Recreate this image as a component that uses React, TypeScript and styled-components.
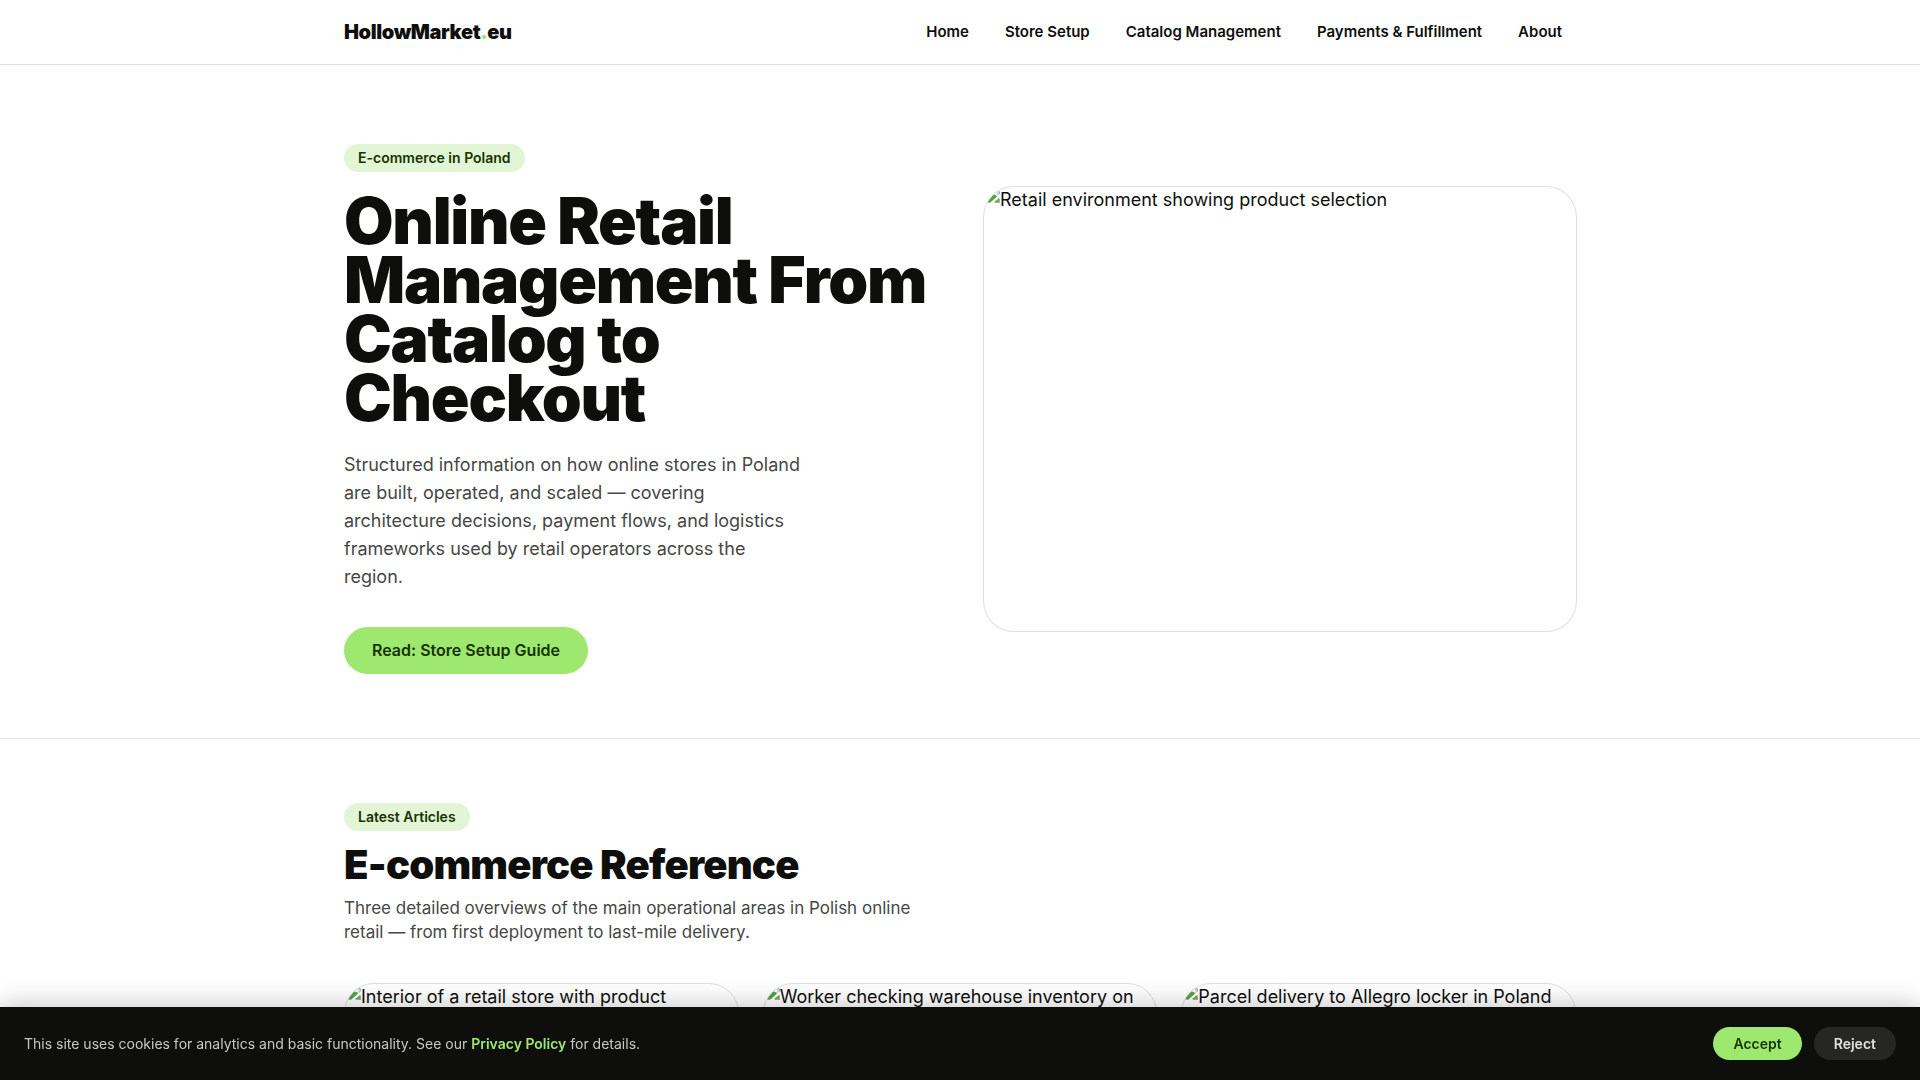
import React from "react";
import styled, { createGlobalStyle } from "styled-components";

const ink = "#0e0f0c";
const lime = "#9fe870";
const forest = "#163300";
const line = "#dfdfde";

const GlobalStyle = createGlobalStyle`
  *, *::before, *::after { box-sizing: border-box; }
  body {
    margin: 0;
    background: #fff;
    color: ${ink};
    font-family: Inter, "Liberation Sans", sans-serif;
    font-size: 18px;
    line-height: 28px;
  }
  h1, h2, p { margin: 0; }
  a { text-decoration: none; color: inherit; }
`;

const Container = styled.div`
  max-width: 1280px;
  margin: 0 auto;
  padding: 0 24px;
`;

const Header = styled.header`
  border-bottom: 1px solid ${line};
`;

const HeaderRow = styled(Container)`
  display: flex;
  align-items: center;
  justify-content: space-between;
  height: 64px;
`;

const Logo = styled.a`
  font-size: 20px;
  font-weight: 900;
  letter-spacing: -0.02em;
`;

const LogoDot = styled.span`
  color: ${lime};
`;

const Nav = styled.nav`
  display: flex;
  gap: 8px;
`;

const NavLink = styled.a`
  padding: 6px 14px;
  font-size: 15px;
  line-height: 24px;
  font-weight: 600;
`;

const Hero = styled.section`
  padding: 79px 0 64px;
  border-bottom: 1px solid #e8e8e7;
`;

const HeroGrid = styled(Container)`
  display: grid;
  grid-template-columns: 1fr 1fr;
  gap: 48px;
  align-items: center;
`;

const Stack = styled.div`
  display: flex;
  flex-direction: column;
  align-items: flex-start;
`;

const Badge = styled.span`
  padding: 4px 14px;
  border-radius: 14px;
  background: #e2f6d5;
  color: ${forest};
  font-size: 14px;
  line-height: 20px;
  font-weight: 600;
`;

const Title = styled.h1`
  margin-top: 19px;
  font-size: 64px;
  line-height: 59px;
  font-weight: 900;
  letter-spacing: -0.02em;
`;

const Lead = styled.p`
  max-width: 460px;
  margin-top: 24px;
  color: #454745;
`;

const HeroButton = styled.a`
  margin-top: 36px;
  padding: 12px 28px;
  border-radius: 24px;
  background: ${lime};
  color: ${forest};
  font-size: 16px;
  line-height: 23px;
  font-weight: 600;
`;

const Frame = styled.div`
  border-radius: 30px;
  overflow: hidden;
  line-height: 26px;
`;

const HeroFrame = styled(Frame)`
  aspect-ratio: 4 / 3;
  box-shadow: 0 0 0 1px ${line};
`;

const CardFrame = styled(Frame)`
  aspect-ratio: 16 / 9;
  border: 1px solid ${line};
`;

const BrokenIcon = styled.svg`
  width: 16px;
  height: 16px;
  vertical-align: top;
`;

const Articles = styled.section`
  padding: 64px 0;
`;

const Heading = styled.h2`
  margin-top: 12px;
  font-size: 40px;
  line-height: 44px;
  font-weight: 900;
  letter-spacing: -0.02em;
`;

const Intro = styled.p`
  max-width: 600px;
  margin-top: 9px;
  color: #454745;
  font-size: 17px;
  line-height: 24px;
`;

const Cards = styled.div`
  display: grid;
  grid-template-columns: repeat(3, 1fr);
  gap: 24px;
  margin-top: 39px;
`;

const CookieBar = styled.aside`
  position: fixed;
  left: 0;
  right: 0;
  bottom: 0;
  display: flex;
  align-items: center;
  justify-content: space-between;
  gap: 24px;
  padding: 20px 24px;
  background: ${ink};
  color: #c8c8c7;
  box-shadow: 0 -4px 24px rgba(0, 0, 0, 0.2);
  font-size: 14px;
  line-height: 21px;
`;

const PolicyLink = styled.a`
  color: ${lime};
  font-weight: 600;
`;

const Actions = styled.div`
  display: flex;
  gap: 12px;
`;

const CookieButton = styled.button<{ $primary?: boolean }>`
  padding: 8px 20px;
  border: 0;
  border-radius: 17px;
  background: ${(p) => (p.$primary ? lime : "#262724")};
  color: ${(p) => (p.$primary ? forest : "#e0e0df")};
  font: 600 14px/17px Inter, "Liberation Sans", sans-serif;
`;

function Missing({ label }: { label: string }) {
  return (
    <>
      <BrokenIcon viewBox="0 0 16 16" aria-hidden="true">
        <path d="M0 0h11l5 5v11H0z" fill="#a9adb3" />
        <path d="M1 1h10v4h4v10H1z" fill="#c6d6f6" />
        <path d="M6 8a2 2 0 0 1 3-2 2 2 0 0 1 4 1v1z" fill="#fff" />
        <path d="M1 15v-3l6-5c3 0 5 1 6 3l-6 5z" fill="#4fa53b" />
        <path d="M6 16L16 7v4l-6 5z" fill="#fff" />
        <path d="M10 15l5-4v4z" fill="#6fae62" />
      </BrokenIcon>
      {label}
    </>
  );
}

const links = ["Home", "Store Setup", "Catalog Management", "Payments & Fulfillment", "About"];

const articles = [
  "Interior of a retail store with product assortment",
  "Worker checking warehouse inventory on tablet",
  "Parcel delivery to Allegro locker in Poland",
];

export default function App() {
  return (
    <>
      <GlobalStyle />
      <Header>
        <HeaderRow>
          <Logo href="#">
            HollowMarket<LogoDot>.</LogoDot>eu
          </Logo>
          <Nav>
            {links.map((label) => (
              <NavLink key={label} href="#">
                {label}
              </NavLink>
            ))}
          </Nav>
        </HeaderRow>
      </Header>
      <main>
        <Hero>
          <HeroGrid>
            <Stack>
              <Badge>E-commerce in Poland</Badge>
              <Title>Online Retail Management From Catalog to Checkout</Title>
              <Lead>
                Structured information on how online stores in Poland are built, operated, and
                scaled — covering architecture decisions, payment flows, and logistics frameworks
                used by retail operators across the region.
              </Lead>
              <HeroButton href="#">Read: Store Setup Guide</HeroButton>
            </Stack>
            <HeroFrame>
              <Missing label="Retail environment showing product selection" />
            </HeroFrame>
          </HeroGrid>
        </Hero>
        <Articles>
          <Container>
            <Stack>
              <Badge>Latest Articles</Badge>
              <Heading>E-commerce Reference</Heading>
              <Intro>
                Three detailed overviews of the main operational areas in Polish online retail —
                from first deployment to last-mile delivery.
              </Intro>
            </Stack>
            <Cards>
              {articles.map((label) => (
                <CardFrame key={label}>
                  <Missing label={label} />
                </CardFrame>
              ))}
            </Cards>
          </Container>
        </Articles>
      </main>
      <CookieBar>
        <p>
          This site uses cookies for analytics and basic functionality. See our{" "}
          <PolicyLink href="#">Privacy Policy</PolicyLink> for details.
        </p>
        <Actions>
          <CookieButton $primary>Accept</CookieButton>
          <CookieButton>Reject</CookieButton>
        </Actions>
      </CookieBar>
    </>
  );
}
